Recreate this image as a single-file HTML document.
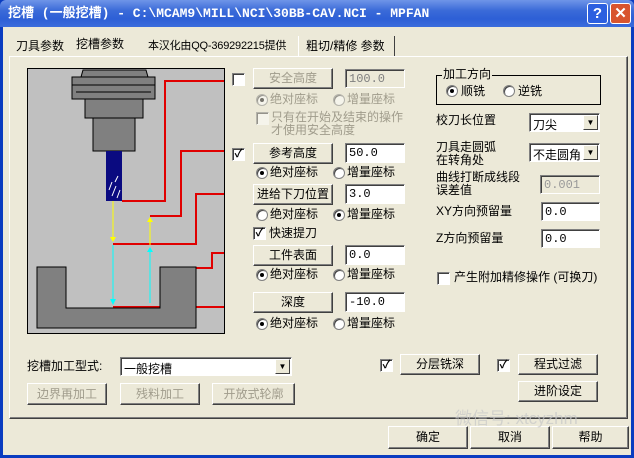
<!DOCTYPE html>
<html><head><meta charset="utf-8"><style>
*{margin:0;padding:0;box-sizing:border-box}
body{width:634px;height:458px;overflow:hidden;background:#0a3cc0;font-family:"Liberation Sans","Noto Sans CJK SC",sans-serif;font-size:12px;color:#000;position:relative}
.a{position:absolute;white-space:nowrap;line-height:13px}
#title{position:absolute;left:0;top:0;width:634px;height:27px;background:linear-gradient(#6f95e8,#3a6ad8 40%,#2d5fd6 70%,#3b6cdc);border-radius:6px 6px 0 0}
.btn{position:absolute;background:#ece9d8;border:1px solid;border-color:#fff #404040 #404040 #fff;box-shadow:inset -1px -1px 0 #808080;text-align:center;font-size:12px}
.dis{color:#a09c8c}
.ed{position:absolute;background:#fff;border:1px solid;border-color:#808080 #fff #fff #808080;box-shadow:inset 1px 1px 0 #404040;font-family:"Liberation Mono",monospace;font-size:12px;padding:2px 0 0 3px}
.cb{position:absolute;width:13px;height:13px;background:#fff;border:1px solid;border-color:#808080 #fff #fff #808080;box-shadow:inset 1px 1px 0 #404040;font-size:11px;line-height:10px;text-align:center;font-weight:bold}
.rd{position:absolute;width:12px;height:12px;border-radius:50%;background:#fff;border:1px solid #808080;box-shadow:inset 1px 1px 0 #404040}
.rd.on::after{content:"";position:absolute;left:3px;top:3px;width:4px;height:4px;border-radius:50%;background:#000}
.cmb{position:absolute;background:#fff;border:1px solid;border-color:#808080 #fff #fff #808080;box-shadow:inset 1px 1px 0 #404040;padding:2px 0 0 3px}
.cmb i{position:absolute;right:1px;top:1px;bottom:1px;width:15px;background:#ece9d8;border:1px solid;border-color:#fff #404040 #404040 #fff;font-style:normal;font-size:8px;text-align:center;line-height:14px}
</style></head><body>
<div id="title">
<div class="a" style="left:8px;top:7px;color:#fff;font-weight:bold;font-size:13px;font-family:'Liberation Mono','Noto Sans CJK SC',monospace">挖槽 (一般挖槽) - C:\MCAM9\MILL\NCI\30BB-CAV.NCI - MPFAN</div>
<div style="position:absolute;left:587px;top:3px;width:21px;height:21px;background:#2c5fe0;border:1px solid #fff;border-radius:3px;color:#fff;font-weight:bold;font-size:15px;text-align:center;line-height:19px">?</div>
<div style="position:absolute;left:610px;top:3px;width:21px;height:21px;background:#d8542e;border:1px solid #fff;border-radius:3px;color:#fff;font-weight:bold;font-size:15px;text-align:center;line-height:19px">✕</div>
</div>
<div style="position:absolute;left:0;top:27px;width:634px;height:431px;background:#ece9d8;border-left:3px solid #0a3cc0;border-right:3px solid #0a3cc0;border-bottom:3px solid #0a3cc0"></div>

<!-- tabs -->
<div style="position:absolute;left:9px;top:56px;width:619px;height:363px;border:1px solid;border-color:#fff #404040 #404040 #fff;box-shadow:inset -1px -1px 0 #808080"></div>
<div class="a" style="left:16px;top:40px">刀具参数</div>
<div class="a" style="left:76px;top:38px">挖槽参数</div>
<div class="a" style="left:148px;top:40px;font-size:11px;letter-spacing:-0.2px">本汉化由QQ-369292215提供</div>
<div style="position:absolute;left:298px;top:36px;width:1px;height:20px;background:#fff"></div>
<div class="a" style="left:306px;top:40px">粗切/精修 参数</div>
<div style="position:absolute;left:394px;top:36px;width:1px;height:20px;background:#404040"></div>

<!-- picture -->
<svg style="position:absolute;left:0;top:0" width="634" height="458">
<rect x="27.5" y="68.5" width="197" height="265" fill="#c0c0c0" stroke="#000"/>
<polygon points="83,70 146,70 148,77 81,77" fill="#808080" stroke="#000"/>
<rect x="72" y="77" width="83" height="22" fill="#808080" stroke="#000"/>
<line x1="72" y1="85" x2="155" y2="85" stroke="#000"/><line x1="76" y1="92" x2="151" y2="92" stroke="#000"/>
<rect x="85" y="99" width="58" height="19" fill="#808080" stroke="#000"/>
<rect x="93" y="118" width="42" height="33" fill="#808080" stroke="#000"/>
<rect x="106" y="151" width="16" height="50" fill="#0a0a80"/>
<path d="M109 190l3-8M112 196l4-10M115 182l3-6M117 198l3-8" stroke="#fff"/>
<g stroke="#e00000" stroke-width="2" fill="none">
<path d="M122 201H165V81H224"/><path d="M150 216H181V151H224"/><path d="M113 244H196V194H224"/><path d="M196 268H212V253H224"/><path d="M113 307H224"/></g>
<path d="M37 267H66V308H160V267H196V328H37Z" fill="#808080" stroke="#000"/>
<line x1="113" y1="201" x2="113" y2="240" stroke="#ff0"/><polygon points="110,237 116,237 113,242" fill="#ff0"/>
<line x1="113" y1="245" x2="113" y2="303" stroke="#0ff"/><polygon points="110,299 116,299 113,305" fill="#0ff"/>
<line x1="150" y1="245" x2="150" y2="218" stroke="#ff0"/><polygon points="147,222 153,222 150,217" fill="#ff0"/>
<line x1="150" y1="303" x2="150" y2="248" stroke="#0ff"/><polygon points="147,252 153,252 150,247" fill="#0ff"/>
</svg>

<!-- middle -->
<div class="cb" style="left:232px;top:73px"></div>
<div class="btn dis" style="left:253px;top:68px;width:80px;height:21px;line-height:19px">安全高度</div>
<div class="ed dis" style="left:345px;top:69px;width:60px;height:19px;background:#ece9d8;color:#808080">100.0</div>
<div class="rd on" style="left:256px;top:94px;opacity:.5"></div><div class="a dis" style="left:270px;top:93px">绝对座标</div>
<div class="rd" style="left:333px;top:94px;opacity:.5"></div><div class="a dis" style="left:347px;top:93px">增量座标</div>
<div class="cb" style="left:256px;top:112px;opacity:.5"></div>
<div class="a dis" style="left:271px;top:111px">只有在开始及结束的操作<br>才使用安全高度</div>

<div class="cb" style="left:232px;top:148px">✓</div>
<div class="btn" style="left:253px;top:143px;width:80px;height:21px;line-height:19px">参考高度</div>
<div class="ed" style="left:345px;top:143px;width:60px;height:20px">50.0</div>
<div class="rd on" style="left:256px;top:167px"></div><div class="a" style="left:270px;top:166px">绝对座标</div>
<div class="rd" style="left:333px;top:167px"></div><div class="a" style="left:347px;top:166px">增量座标</div>
<div class="btn" style="left:253px;top:184px;width:80px;height:21px;line-height:19px">进给下刀位置</div>
<div class="ed" style="left:345px;top:184px;width:60px;height:20px">3.0</div>
<div class="rd" style="left:256px;top:209px"></div><div class="a" style="left:270px;top:208px">绝对座标</div>
<div class="rd on" style="left:333px;top:209px"></div><div class="a" style="left:347px;top:208px">增量座标</div>
<div class="cb" style="left:253px;top:227px">✓</div><div class="a" style="left:269px;top:227px">快速提刀</div>
<div class="btn" style="left:253px;top:245px;width:80px;height:21px;line-height:19px">工件表面</div>
<div class="ed" style="left:345px;top:245px;width:60px;height:20px">0.0</div>
<div class="rd on" style="left:256px;top:269px"></div><div class="a" style="left:270px;top:268px">绝对座标</div>
<div class="rd" style="left:333px;top:269px"></div><div class="a" style="left:347px;top:268px">增量座标</div>
<div class="btn" style="left:253px;top:292px;width:80px;height:21px;line-height:19px">深度</div>
<div class="ed" style="left:345px;top:292px;width:60px;height:20px">-10.0</div>
<div class="rd on" style="left:256px;top:318px"></div><div class="a" style="left:270px;top:317px">绝对座标</div>
<div class="rd" style="left:333px;top:318px"></div><div class="a" style="left:347px;top:317px">增量座标</div>

<!-- right -->
<div style="position:absolute;left:436px;top:75px;width:165px;height:30px;border:1px solid #000"></div>
<div class="a" style="left:442px;top:68px;background:#ece9d8;padding:0 1px">加工方向</div>
<div class="rd on" style="left:446px;top:85px"></div><div class="a" style="left:461px;top:85px">顺铣</div>
<div class="rd" style="left:503px;top:85px"></div><div class="a" style="left:518px;top:85px">逆铣</div>
<div class="a" style="left:436px;top:114px">校刀长位置</div>
<div class="cmb" style="left:529px;top:113px;width:71px;height:19px">刀尖<i>▼</i></div>
<div class="a" style="left:436px;top:141px">刀具走圆弧<br>在转角处</div>
<div class="cmb" style="left:529px;top:143px;width:71px;height:19px">不走圆角<i>▼</i></div>
<div class="a" style="left:436px;top:171px">曲线打断成线段<br>误差值</div>
<div class="ed" style="left:540px;top:175px;width:60px;height:19px;background:#ece9d8;color:#999">0.001</div>
<div class="a" style="left:436px;top:205px">XY方向预留量</div>
<div class="ed" style="left:541px;top:202px;width:59px;height:19px">0.0</div>
<div class="a" style="left:436px;top:232px">Z方向预留量</div>
<div class="ed" style="left:541px;top:229px;width:59px;height:19px">0.0</div>
<div class="cb" style="left:437px;top:272px"></div><div class="a" style="left:454px;top:271px">产生附加精修操作 (可换刀)</div>

<!-- bottom -->
<div class="a" style="left:27px;top:360px">挖槽加工型式:</div>
<div class="cmb" style="left:120px;top:357px;width:172px;height:19px">一般挖槽<i>▼</i></div>
<div class="cb" style="left:380px;top:359px">✓</div>
<div class="btn" style="left:400px;top:354px;width:80px;height:21px;line-height:19px">分层铣深</div>
<div class="cb" style="left:497px;top:359px">✓</div>
<div class="btn" style="left:518px;top:354px;width:80px;height:21px;line-height:19px">程式过滤</div>
<div class="btn" style="left:518px;top:381px;width:80px;height:21px;line-height:19px">进阶设定</div>
<div class="btn dis" style="left:27px;top:383px;width:80px;height:22px;line-height:20px">边界再加工</div>
<div class="btn dis" style="left:120px;top:383px;width:80px;height:22px;line-height:20px">残料加工</div>
<div class="btn dis" style="left:212px;top:383px;width:83px;height:22px;line-height:20px">开放式轮廓</div>
<div class="btn" style="left:388px;top:426px;width:80px;height:23px;line-height:21px">确定</div>
<div class="btn" style="left:470px;top:426px;width:80px;height:23px;line-height:21px">取消</div>
<div class="btn" style="left:552px;top:426px;width:77px;height:23px;line-height:21px">帮助</div>
<div class="a" style="left:455px;top:410px;font-size:17px;line-height:18px;color:rgba(200,200,200,.7)">微信号: xtcyzhm</div>
</body></html>
